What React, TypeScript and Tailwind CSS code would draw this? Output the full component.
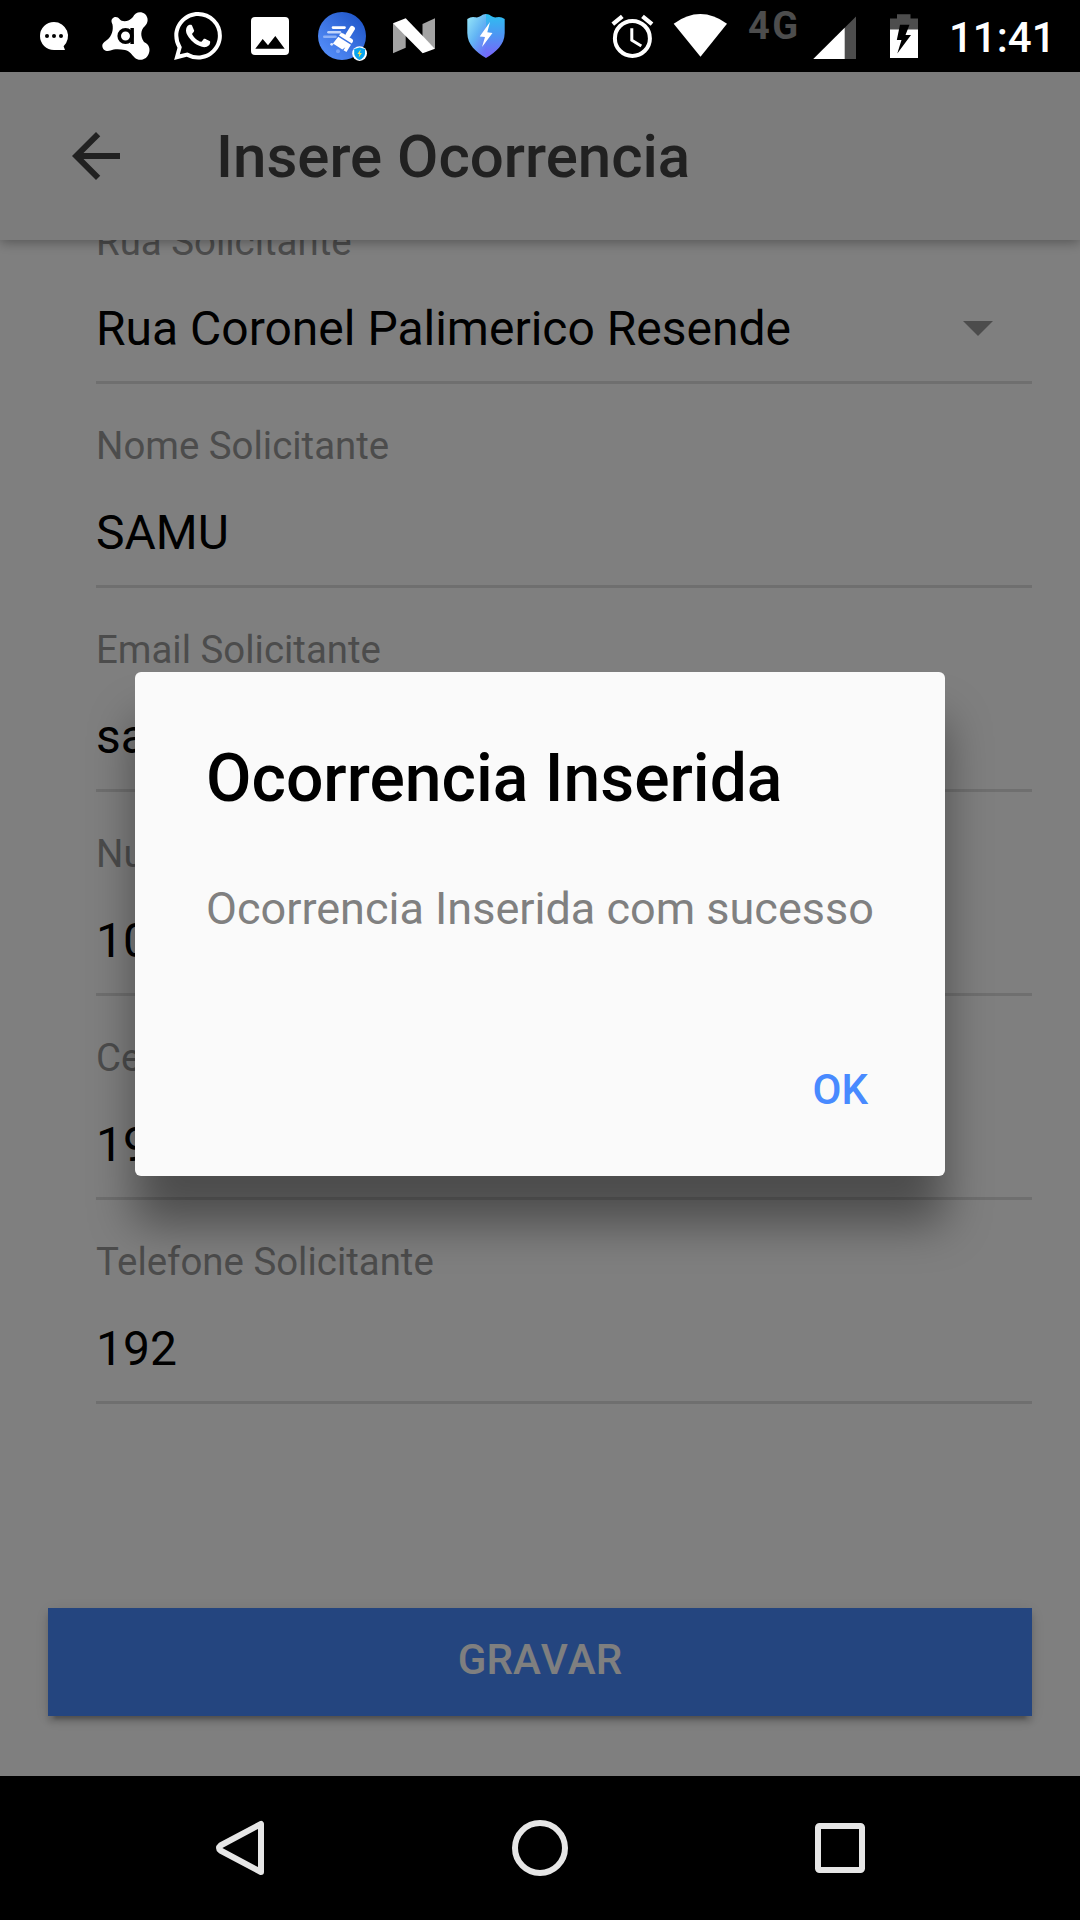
import React from "react";
import { SiWhatsapp } from "react-icons/si";

const fields = [
  { label: "Rua Solicitante", value: "Rua Coronel Palimerico Resende", select: true },
  { label: "Nome Solicitante", value: "SAMU" },
  { label: "Email Solicitante", value: "samu" },
  { label: "Numero Solicitante", value: "10" },
  { label: "Celular Solicitante", value: "192" },
  { label: "Telefone Solicitante", value: "192" },
];

function Slot({ children }: { children: React.ReactNode }) {
  return (
    <svg width="72" height="72" viewBox="0 0 72 72" className="shrink-0">
      {children}
    </svg>
  );
}

function NotificationIcons() {
  return (
    <div className="flex">
      <Slot>
        <path d="M36 22a14 14 0 1 0 0 28H47L45.6 46.2A14 14 0 0 0 36 22Z" fill="#fff" />
        <circle cx="29" cy="36" r="2" />
        <circle cx="36" cy="36" r="2" />
        <circle cx="43" cy="36" r="2" />
      </Slot>
      <Slot>
        <path
          d="M22 19C24 16 28 16.500 29.500 19C32 22.500 39 22 43 17C45 12 51 11 55 14C59 18 58 23 55 26C50.500 30 50 36 54 42C59 44 60.500 49 59 53C57 60 49 61.500 45 58C42 55 40 51 35 50C29 49 24 49 20.500 50.500C16.500 52 12.500 50 12.300 46C12.300 43 15 41.500 17 40C22 36 23.500 30 22.500 24.500C21.500 22.500 21 20.500 22 19Z"
          fill="#fff"
        />
        <circle cx="35.500" cy="36" r="6.300" fill="none" stroke="#000" strokeWidth="3.600" />
        <rect x="40.400" y="28" width="3.500" height="16" />
      </Slot>
      <div className="flex h-[72px] w-[72px] items-center justify-center">
        <SiWhatsapp size={48} color="#fff" />
      </div>
      <Slot>
        <rect x="17" y="17" width="38" height="38" rx="4" fill="#fff" />
        <path d="M21.300 48.700L28.700 39L34 45.300L41.300 36L50.700 48.700Z" />
      </Slot>
      <Slot>
        <defs>
          <linearGradient id="clean" x1="0" y1="1" x2="1" y2="0">
            <stop offset="0" stopColor="#5b95ff" />
            <stop offset="1" stopColor="#1a50c4" />
          </linearGradient>
        </defs>
        <circle cx="36" cy="36" r="24" fill="url(#clean)" />
        <g strokeWidth="2.600" strokeLinecap="round">
          <path d="M27 27.600H38.500" stroke="#fff" />
          <path d="M22.500 32.300H34" stroke="#c3d6fb" />
          <path d="M18.300 36.700H29.500" stroke="#8eb2f7" />
        </g>
        <circle cx="25.700" cy="44.300" r="1.400" fill="#dbe7ff" />
        <circle cx="32" cy="51.300" r="2" fill="#79a3f5" />
        <g transform="translate(41 37) rotate(32)" fill="#fff">
          <rect x="-2.700" y="-12.500" width="5.400" height="13" rx="2.700" />
          <path d="M-7.500 3V1.500Q-7.500 -1 -5 -1H5Q7.500 -1 7.500 1.500V3Z" />
          <path d="M-7.500 4.500H7.500V13H4V9.500L2.600 13H-8.500Z" />
        </g>
        <circle cx="53.600" cy="53.600" r="7.400" fill="#fff" />
        <path d="M53.600 47.500L59 49V54Q58 58 53.600 60Q49.200 58 48.200 54V49Z" fill="#0aa4ee" />
        <path d="M54.600 49.500L51.500 54H53.400L52.700 57.500L55.900 53H54Z" fill="#ffe14a" />
      </Slot>
      <Slot>
        <path d="M15 23.300V53.300L27.700 47.700V30Z" fill="#a3a3a3" />
        <path d="M44.500 24L57 18.300V48.700L44.500 37Z" fill="#a3a3a3" />
        <path d="M15 23.300L27.700 18.300L57 48.700L44.700 53.300Z" fill="#fff" />
      </Slot>
      <Slot>
        <defs>
          <linearGradient id="shieldL" x1="0" y1="0" x2="0.700" y2="1">
            <stop offset="0" stopColor="#9aeaf8" />
            <stop offset="0.550" stopColor="#62b4f4" />
            <stop offset="1" stopColor="#6b74f8" />
          </linearGradient>
          <linearGradient id="shieldR" x1="0" y1="0" x2="0" y2="1">
            <stop offset="0" stopColor="#2cc0f0" />
            <stop offset="0.500" stopColor="#4f94f3" />
            <stop offset="1" stopColor="#7c62fa" />
          </linearGradient>
        </defs>
        <path d="M36 14C31 14 31 18 25 17.300Q21 16.500 17.300 19V33C17.500 45 26 52 36 58Z" fill="url(#shieldL)" />
        <path d="M36 14C41 14 41 18 47 17.300Q51 16.500 54.700 19V33C54.500 45 46 52 36 58Z" fill="url(#shieldR)" />
        <path d="M40 22L29.700 36.500L35 37L32 47L42.500 33L37.300 32.300Z" fill="#fff" />
      </Slot>
    </div>
  );
}

function SystemIcons() {
  return (
    <div className="flex">
      <svg width="54" height="72" viewBox="606 0 54 72" fill="none" stroke="#fff">
        <circle cx="632.400" cy="38.400" r="17.500" strokeWidth="4" />
        <path d="M631.800 28.300V40.200L641.300 46" strokeWidth="3" />
        <path d="M612.800 24.200L622.300 16.300M642.500 16.300L652 24.200" strokeWidth="4.200" />
      </svg>
      <svg width="84" height="72" viewBox="660 0 84 72">
        <path d="M673.700 23.700Q700.300 4.500 727 23.700L700.500 56.700Z" fill="#fff" />
      </svg>
      <span className="mt-[6px] w-[64px] pl-1 text-[38px] leading-[40px] font-bold tracking-[2.5px] text-[#4d4d4d]">
        4G
      </span>
      <svg width="54" height="72" viewBox="808 0 54 72">
        <path d="M813.300 59L856 16.500V59Z" fill="#4d4d4d" />
        <path d="M813.300 59L844.700 27.800V59Z" fill="#fff" />
      </svg>
      <svg width="72" height="72" viewBox="862 0 72 72">
        <path d="M890 18.500H897V14.300H910.500V18.500H918V30H890Z" fill="#4d4d4d" />
        <path d="M890 29.500H918V58H890Z" fill="#fff" />
        <path d="M900 24.700H909.500L905.500 35H911L897.300 53.500L901.500 40H896.800Z" fill="#000" />
      </svg>
    </div>
  );
}

function StatusBar() {
  return (
    <div className="flex h-[72px] shrink-0 bg-black pl-[18px]">
      <NotificationIcons />
      <div className="ml-[84px] flex">
        <SystemIcons />
        <span className="ml-[15px] text-[42px] leading-[75px] font-medium text-white">11:41</span>
      </div>
    </div>
  );
}

function Dialog() {
  return (
    <div className="absolute inset-0 z-20 flex items-center justify-center bg-black/50">
      <div className="flex h-[504px] w-[810px] flex-col rounded-[6px] bg-[#fafafa] pt-[70px] pr-[72px] pl-[71px] shadow-[0_48px_46px_rgba(0,0,0,0.4)]">
        <h2 className="text-[66px] leading-[74px] font-medium whitespace-nowrap text-black">
          Ocorrencia Inserida
        </h2>
        <p className="mt-[63px] text-[45px] leading-[60px] whitespace-nowrap text-[#808080]">
          Ocorrencia Inserida com sucesso
        </p>
        <button className="mt-[121px] mr-[5px] self-end text-[42px] leading-[60px] font-medium text-[#488aff]">
          OK
        </button>
      </div>
    </div>
  );
}

function NavBar() {
  return (
    <div className="flex h-[144px] shrink-0 justify-between bg-black px-[168px]">
      <svg width="144" height="144" viewBox="168 0 144 144" fill="none" stroke="#e6e6e6" strokeWidth="6">
        <path d="M261 48V96L220.500 74.500Q217.500 72 220.500 69.500Z" strokeLinejoin="round" />
      </svg>
      <svg width="144" height="144" viewBox="468 0 144 144" fill="none" stroke="#e6e6e6" strokeWidth="6">
        <circle cx="540" cy="72" r="25" />
      </svg>
      <svg width="144" height="144" viewBox="768 0 144 144" fill="none" stroke="#e6e6e6" strokeWidth="6">
        <rect x="818" y="50" width="44" height="44" rx="1.500" />
      </svg>
    </div>
  );
}

export default function App() {
  return (
    <div className="flex h-[1920px] w-[1080px] flex-col overflow-hidden bg-black font-['Roboto',sans-serif]">
      <StatusBar />
      <div className="relative flex h-[1704px] flex-col overflow-hidden bg-white">
        <header className="z-10 flex h-[168px] shrink-0 items-center bg-[#f8f8f8] pl-[60px] shadow-[0_2px_12px_rgba(0,0,0,0.35)]">
          <svg width="72" height="72" viewBox="0 0 24 24" fill="#424242">
            <path d="M20 11H7.830l5.590-5.590L12 4l-8 8 8 8 1.410-1.410L7.830 13H20v-2z" />
          </svg>
          <h1 className="ml-[84px] pt-[2px] text-[60px] leading-[72px] font-medium text-[#424242]">
            Insere Ocorrencia
          </h1>
        </header>
        <main className="-mt-[60px] pl-[96px] pr-[48px]">
          {fields.map((f) => (
            <div key={f.label} className="h-[204px] border-b-[3px] border-[#dedede] pt-[38px]">
              <div className="text-[38.4px] leading-[48px] text-[#999]">{f.label}</div>
              <div className="mt-[33px] flex items-center justify-between pr-[39px] text-[48px] leading-[60px] text-black">
                {f.value}
                {f.select && (
                  <svg width="30" height="15" viewBox="0 0 30 15" className="mb-[2px]">
                    <path d="M0 0H30L15 15Z" fill="#999" />
                  </svg>
                )}
              </div>
            </div>
          ))}
        </main>
        <button className="mx-[48px] mt-[204px] h-[108px] bg-[#488aff] pb-1 text-[42px] leading-[60px] font-medium text-white shadow-[0_6px_6px_0_rgba(0,0,0,0.14),0_9px_3px_-6px_rgba(0,0,0,0.2),0_3px_15px_0_rgba(0,0,0,0.12)] [font-kerning:none]">
          GRAVAR
        </button>
        <Dialog />
      </div>
      <NavBar />
    </div>
  );
}
